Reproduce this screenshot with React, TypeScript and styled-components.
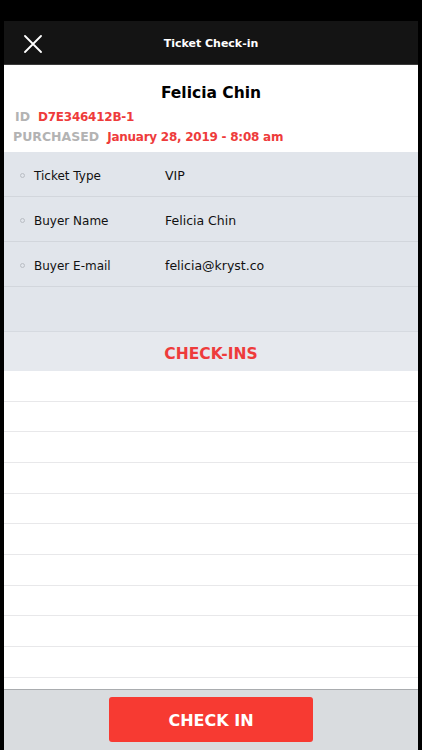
import React from "react";
import styled, { createGlobalStyle } from "styled-components";

const GlobalStyle = createGlobalStyle`
  html, body {
    margin: 0;
    padding: 0;
    background: #000;
  }
  * {
    box-sizing: border-box;
  }
`;

const Screen = styled.div`
  width: 422px;
  height: 750px;
  background: #000;
  padding: 21px 4px 0;
  display: flex;
  flex-direction: column;
  font-family: "DejaVu Sans", "Noto Sans", sans-serif;
  overflow: hidden;
`;

const TopBar = styled.header`
  height: 44px;
  flex-shrink: 0;
  background: #141414;
  border-bottom: 1px solid #3a3a3a;
  display: flex;
  align-items: center;
  position: relative;
`;

const CloseButton = styled.button`
  background: none;
  border: none;
  padding: 0;
  margin: 2px 0 0 20px;
  width: 18px;
  height: 18px;
  display: flex;
  align-items: center;
  justify-content: center;
  cursor: pointer;
`;

const TopTitle = styled.h1`
  position: absolute;
  left: 0;
  right: 0;
  top: 16px;
  text-align: center;
  margin: 0;
  font-size: 11px;
  line-height: 14px;
  font-weight: 700;
  color: #fff;
  pointer-events: none;
`;

const InfoBlock = styled.section`
  height: 87px;
  flex-shrink: 0;
  background: #fff;
  padding: 19px 9px 0;
`;

const BuyerName = styled.h2`
  margin: 0 0 5px;
  text-align: center;
  font-size: 15.5px;
  font-weight: 700;
  color: #000;
  line-height: 18px;
`;

const MetaLine = styled.div<{ $indent?: number }>`
  display: flex;
  align-items: baseline;
  gap: 8px;
  padding-left: ${(p) => p.$indent ?? 0}px;
  line-height: 20px;
  font-weight: 700;
`;

const MetaLabel = styled.span`
  color: #b3b3b3;
  font-size: 12.5px;
`;

const MetaValue = styled.span`
  color: #ee3b3b;
  font-size: 12px;
  letter-spacing: -0.25px;
`;

const DetailList = styled.div`
  flex-shrink: 0;
  background: #e1e5eb;
`;

const DetailRow = styled.div`
  height: 45px;
  display: flex;
  align-items: center;
  padding-top: 3px;
  border-bottom: 1px solid #d2d6dc;
  font-size: 12px;
  color: #111;
`;

const Bullet = styled.span`
  width: 5px;
  height: 5px;
  border-radius: 50%;
  border: 1px solid #b9bdc4;
  margin: 0 9px 0 16px;
  flex-shrink: 0;
`;

const DetailLabel = styled.span`
  width: 131px;
`;

const DetailValue = styled.span`
  font-size: 12.5px;
`;

const EmptyRow = styled.div`
  height: 44px;
`;

const SectionHeader = styled.div`
  height: 40px;
  flex-shrink: 0;
  background: #e6e9ee;
  border-top: 1px solid #d6dae0;
  display: flex;
  align-items: center;
  justify-content: center;
  padding-top: 4px;
  font-size: 15.5px;
  font-weight: 700;
  color: #ee3b3b;
`;

const CheckinList = styled.div`
  flex: 1;
  background: #fff;
  overflow: hidden;
`;

const CheckinRow = styled.div`
  height: 30.67px;
  border-bottom: 1px solid #e8e8ea;
`;

const Footer = styled.footer`
  height: 61px;
  flex-shrink: 0;
  background: #d9dcdf;
  border-top: 1px solid #a9acaf;
  display: flex;
  justify-content: center;
  padding-top: 7px;
`;

const CheckInButton = styled.button`
  width: 204px;
  height: 45px;
  background: #f73a32;
  border: none;
  border-radius: 3px;
  padding-top: 3px;
  color: #fff;
  font-family: inherit;
  font-size: 16px;
  font-weight: 700;
  cursor: pointer;
`;

const details = [
  { label: "Ticket Type", value: "VIP" },
  { label: "Buyer Name", value: "Felicia Chin" },
  { label: "Buyer E-mail", value: "felicia@kryst.co" },
];

const App = () => {
  return (
    <>
      <GlobalStyle />
      <Screen>
        <TopBar>
          <CloseButton aria-label="Close">
            <svg width="18" height="18" viewBox="0 0 18 18">
              <path d="M1 1L17 17M17 1L1 17" stroke="#fff" strokeWidth="1.8" strokeLinecap="round" />
            </svg>
          </CloseButton>
          <TopTitle>Ticket Check-in</TopTitle>
        </TopBar>

        <InfoBlock>
          <BuyerName>Felicia Chin</BuyerName>
          <MetaLine $indent={2}>
            <MetaLabel>ID</MetaLabel>
            <MetaValue>D7E346412B-1</MetaValue>
          </MetaLine>
          <MetaLine>
            <MetaLabel>PURCHASED</MetaLabel>
            <MetaValue>January 28, 2019 - 8:08 am</MetaValue>
          </MetaLine>
        </InfoBlock>

        <DetailList>
          {details.map((d) => (
            <DetailRow key={d.label}>
              <Bullet />
              <DetailLabel>{d.label}</DetailLabel>
              <DetailValue>{d.value}</DetailValue>
            </DetailRow>
          ))}
          <EmptyRow />
        </DetailList>

        <SectionHeader>CHECK-INS</SectionHeader>

        <CheckinList>
          {Array.from({ length: 11 }).map((_, i) => (
            <CheckinRow key={i} />
          ))}
        </CheckinList>

        <Footer>
          <CheckInButton>CHECK IN</CheckInButton>
        </Footer>
      </Screen>
    </>
  );
};

export default App;
